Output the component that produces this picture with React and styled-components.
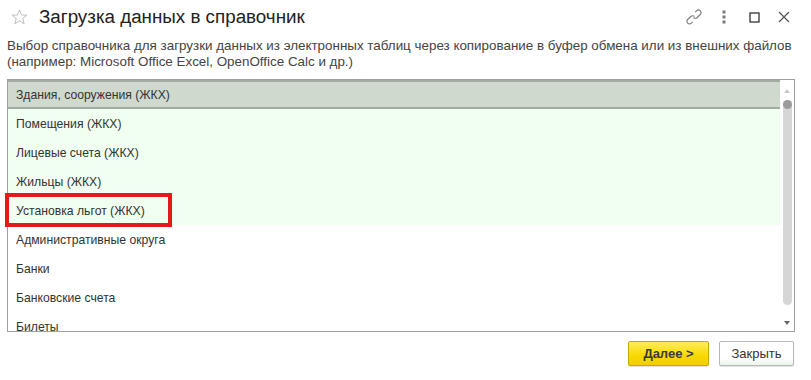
import React from "react";
import styled, { createGlobalStyle } from "styled-components";

const Global = createGlobalStyle`
  html, body {
    margin: 0;
    padding: 0;
    background: #fff;
  }
  body {
    font-family: Arial, "Liberation Sans", sans-serif;
    color: #333;
  }
`;

const Window = styled.div`
  width: 811px;
  height: 380px;
  display: flex;
  flex-direction: column;
  background: #fff;
  overflow: hidden;
`;

const Header = styled.div`
  height: 34px;
  display: flex;
  align-items: center;
  padding: 0 12px 0 11px;
`;

const Title = styled.h1`
  margin: 0 0 0 11px;
  font-size: 18.8px;
  font-weight: normal;
  color: #222;
  flex: 1;
`;

const HeaderTools = styled.div`
  display: flex;
  align-items: center;
`;

const ToolButton = styled.div`
  width: ${(p) => p.w || 30}px;
  height: 20px;
  display: flex;
  align-items: center;
  justify-content: center;
`;

const Description = styled.p`
  margin: 4px 0 0;
  padding: 0 7px;
  font-size: 13.4px;
  line-height: 16px;
  color: #444;
  white-space: nowrap;
`;

const ListFrame = styled.div`
  position: relative;
  margin: 9px 16px 0 7px;
  height: 251px;
  border: 1px solid #a0a0a0;
  display: flex;
`;

const Rows = styled.div`
  flex: 1;
  overflow: hidden;
`;

const Row = styled.div`
  height: 29px;
  box-sizing: border-box;
  display: flex;
  align-items: center;
  padding-left: 8px;
  font-size: 12.2px;
  color: #333;
  background: ${(p) => (p.selected ? "#cfd9cd" : p.marked ? "#f0fff0" : "#fff")};
  border-top: ${(p) => (p.selected ? "2px solid #a4aba2" : "none")};
  border-bottom: ${(p) => (p.selected ? "2px solid #a4aba2" : "none")};
`;

const Scroll = styled.div`
  width: 14px;
  display: flex;
  flex-direction: column;
  align-items: center;
  padding: 9px 0 6px;
  box-sizing: border-box;
`;

const Arrow = styled.div`
  width: 0;
  height: 0;
  border-left: 3.5px solid transparent;
  border-right: 3.5px solid transparent;
  ${(p) =>
    p.down
      ? `border-top: 4px solid ${p.color};`
      : `border-bottom: 4px solid ${p.color};`}
`;

const Track = styled.div`
  flex: 1;
  width: 9px;
  margin: 7px 0 8px;
  display: flex;
  flex-direction: column;
`;

const Thumb = styled.div`
  height: 205px;
  border-radius: 5px;
  background: #d6d6d6;
  display: flex;
  flex-direction: column;
`;

const ThumbCap = styled.div`
  height: 9px;
  border-radius: 50%;
  background: #9b9b9b;
`;

const Marker = styled.div`
  position: absolute;
  left: -3px;
  top: 113px;
  width: 159px;
  height: 26px;
  border: 4px solid #e41a1a;
  pointer-events: none;
`;

const Footer = styled.div`
  display: flex;
  justify-content: flex-end;
  gap: 10px;
  padding: 9px 17px 0 0;
`;

const Button = styled.button`
  height: 25px;
  min-width: ${(p) => p.w}px;
  box-sizing: border-box;
  border-radius: 2px;
  font-family: Arial, "Liberation Sans", sans-serif;
  font-size: 13px;
  padding: 0 10px;
  cursor: pointer;
  color: ${(p) => (p.primary ? "#3a3a3a" : "#333")};
  font-weight: ${(p) => (p.primary ? "bold" : "normal")};
  border: 1px solid ${(p) => (p.primary ? "#c9a900" : "#b8b8b8")};
  background: ${(p) =>
    p.primary
      ? "linear-gradient(#ffed5c, #f8d800 60%, #f2cf00)"
      : "linear-gradient(#fff, #fff 70%, #eaf4ea)"};
  box-shadow: 0 1px 1px rgba(0, 0, 0, 0.12);
`;

const items = [
  "Здания, сооружения (ЖКХ)",
  "Помещения (ЖКХ)",
  "Лицевые счета (ЖКХ)",
  "Жильцы (ЖКХ)",
  "Установка льгот (ЖКХ)",
  "Административные округа",
  "Банки",
  "Банковские счета",
  "Билеты",
];

function Star() {
  return (
    <svg width="17" height="16" viewBox="0 0 17 16">
      <path
        d="M8.5 1 L10.6 6 L15.8 6.2 L11.8 9.5 L13.1 14.7 L8.5 11.8 L3.9 14.7 L5.2 9.5 L1.2 6.2 L6.4 6 Z"
        fill="none"
        stroke="#bdbdbd"
        strokeWidth="1"
        strokeLinejoin="round"
      />
    </svg>
  );
}

function LinkIcon() {
  return (
    <svg width="16" height="16" viewBox="0 0 16 16" fill="none" stroke="#808080" strokeWidth="1.2">
      <path d="M9.2 3.2 L10.6 1.8 a2.6 2.6 0 0 1 3.7 3.7 L11.3 8.5 a2.6 2.6 0 0 1 -3.7 0" />
      <path d="M6.8 12.8 L5.4 14.2 a2.6 2.6 0 0 1 -3.7 -3.7 L4.7 7.5 a2.6 2.6 0 0 1 3.7 0" />
    </svg>
  );
}

function Dots() {
  return (
    <svg width="4" height="14" viewBox="0 0 4 14" fill="#7a7a7a">
      <rect x="0.5" y="0.5" width="3" height="3" />
      <rect x="0.5" y="5.5" width="3" height="3" />
      <rect x="0.5" y="10.5" width="3" height="3" />
    </svg>
  );
}

function Maximize() {
  return (
    <svg width="11" height="11" viewBox="0 0 11 11">
      <rect x="1" y="1" width="9" height="9" fill="none" stroke="#333" strokeWidth="1.3" />
    </svg>
  );
}

function Close() {
  return (
    <svg width="12" height="12" viewBox="0 0 12 12" stroke="#555" strokeWidth="1.2">
      <path d="M1 1 L11 11 M11 1 L1 11" />
    </svg>
  );
}

export default function App() {
  return (
    <Window>
      <Global />
      <Header>
        <Star />
        <Title>Загрузка данных в справочник</Title>
        <HeaderTools>
          <ToolButton w={30}>
            <LinkIcon />
          </ToolButton>
          <ToolButton w={30}>
            <Dots />
          </ToolButton>
          <ToolButton w={30}>
            <Maximize />
          </ToolButton>
          <ToolButton w={30}>
            <Close />
          </ToolButton>
        </HeaderTools>
      </Header>
      <Description>
        Выбор справочника для загрузки данных из электронных таблиц через копирование в буфер обмена или из внешних файлов
        <br />
        (например: Microsoft Office Excel, OpenOffice Calc и др.)
      </Description>
      <ListFrame>
        <Rows>
          {items.map((name, i) => (
            <Row key={name} selected={i === 0} marked={i > 0 && i < 5}>
              {name}
            </Row>
          ))}
        </Rows>
        <Scroll>
          <Arrow color="#c8c8c8" />
          <Track>
            <Thumb>
              <ThumbCap />
            </Thumb>
          </Track>
          <Arrow down color="#666" />
        </Scroll>
        <Marker />
      </ListFrame>
      <Footer>
        <Button primary w={81}>Далее &gt;</Button>
        <Button w={75}>Закрыть</Button>
      </Footer>
    </Window>
  );
}
